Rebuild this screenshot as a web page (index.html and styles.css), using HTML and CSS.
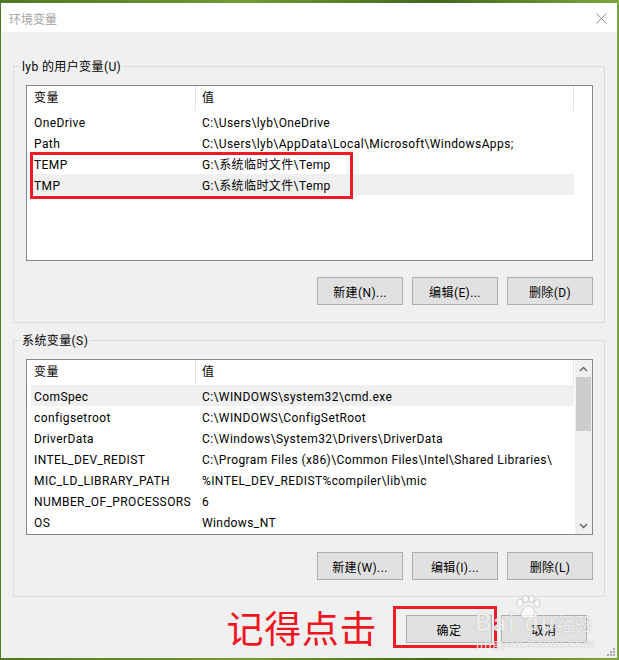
FILE: index.html
```html
<!DOCTYPE html>
<html lang="zh-CN">
<head>
<meta charset="utf-8">
<title>环境变量</title>
<link rel="stylesheet" href="styles.css">
</head>
<body>
<div class="window">
  <div class="titlebar">
    <span class="title">环境变量</span>
    <svg class="close" width="11" height="11" viewBox="0 0 11 11"><path d="M0.5 0.5 L10.5 10.5 M10.5 0.5 L0.5 10.5" stroke="#8a8a8a" stroke-width="1" fill="none"/></svg>
  </div>
  <div class="content">
    <fieldset class="group">
      <legend>lyb 的用户变量(U)</legend>
      <div class="group-body">
        <div class="list">
          <div class="list-main">
            <div class="list-header"><div class="hcell c1">变量</div><div class="hcell c2">值</div></div>
            <div class="row"><span class="c1">OneDrive</span><span class="c2">C:\Users\lyb\OneDrive</span></div>
            <div class="row"><span class="c1">Path</span><span class="c2">C:\Users\lyb\AppData\Local\Microsoft\WindowsApps;</span></div>
            <div class="row"><span class="c1">TEMP</span><span class="c2">G:\系统临时文件\Temp</span></div>
            <div class="row sel"><span class="c1">TMP</span><span class="c2">G:\系统临时文件\Temp</span></div>
          </div>
          <div class="vspace"></div>
          <div class="mark-rows"></div>
        </div>
        <div class="btns">
          <button class="btn">新建(N)...</button>
          <button class="btn">编辑(E)...</button>
          <button class="btn">删除(D)</button>
        </div>
      </div>
    </fieldset>

    <fieldset class="group group2">
      <legend>系统变量(S)</legend>
      <div class="group-body body2">
        <div class="list">
          <div class="list-main">
            <div class="list-header"><div class="hcell c1">变量</div><div class="hcell c2">值</div></div>
            <div class="row sel"><span class="c1">ComSpec</span><span class="c2">C:\WINDOWS\system32\cmd.exe</span></div>
            <div class="row"><span class="c1">configsetroot</span><span class="c2">C:\WINDOWS\ConfigSetRoot</span></div>
            <div class="row"><span class="c1">DriverData</span><span class="c2">C:\Windows\System32\Drivers\DriverData</span></div>
            <div class="row"><span class="c1">INTEL_DEV_REDIST</span><span class="c2">C:\Program Files (x86)\Common Files\Intel\Shared Libraries\</span></div>
            <div class="row"><span class="c1">MIC_LD_LIBRARY_PATH</span><span class="c2">%INTEL_DEV_REDIST%compiler\lib\mic</span></div>
            <div class="row"><span class="c1">NUMBER_OF_PROCESSORS</span><span class="c2">6</span></div>
            <div class="row"><span class="c1">OS</span><span class="c2">Windows_NT</span></div>
          </div>
          <div class="vscroll">
            <div class="arrow"><svg width="9" height="6" viewBox="0 0 9 6"><path d="M1 5 L4.5 1.5 L8 5" stroke="#606060" stroke-width="1.4" fill="none"/></svg></div>
            <div class="thumb"></div>
            <div class="track"></div>
            <div class="arrow"><svg width="9" height="6" viewBox="0 0 9 6"><path d="M1 1 L4.5 4.5 L8 1" stroke="#606060" stroke-width="1.4" fill="none"/></svg></div>
          </div>
        </div>
        <div class="btns">
          <button class="btn">新建(W)...</button>
          <button class="btn">编辑(I)...</button>
          <button class="btn">删除(L)</button>
        </div>
      </div>
    </fieldset>

    <div class="footer">
      <span class="note">记得点击</span>
      <div class="mark-ok"><button class="btn">确定</button></div>
      <button class="btn cancel">取消</button>
    </div>
  </div>

  <div class="watermark">
    <svg class="paw" width="30" height="24" viewBox="0 0 30 24">
      <g fill="rgba(255,255,255,0.75)" stroke="rgba(160,160,160,0.6)" stroke-width="0.8">
        <ellipse cx="7" cy="8" rx="3.2" ry="4"/>
        <ellipse cx="12.5" cy="4" rx="3" ry="3.6"/>
        <ellipse cx="18.5" cy="4" rx="3" ry="3.6"/>
        <ellipse cx="24" cy="8.5" rx="3" ry="3.8"/>
        <path d="M15.5 11 C11 11 8 17 8 20 C8 23 11 24 15.5 23 C20 24 23 23 23 20 C23 17 20 11 15.5 11 Z"/>
      </g>
    </svg>
    <div class="wm-line1"><span class="wm-bai">Bai</span><span class="wm-du">du</span><span class="wm-jy">经验</span></div>
    <div class="wm-line2">jingyan.baidu.com</div>
  </div>

  <svg class="grip" width="8" height="8" viewBox="0 0 8 8">
    <g fill="#a8a8a8">
      <rect x="6" y="0" width="2" height="2"/>
      <rect x="3" y="3" width="2" height="2"/><rect x="6" y="3" width="2" height="2"/>
      <rect x="0" y="6" width="2" height="2"/><rect x="3" y="6" width="2" height="2"/><rect x="6" y="6" width="2" height="2"/>
    </g>
  </svg>
</div>
</body>
</html>
```

FILE: styles.css
```css
html, body {
  margin: 0;
  padding: 0;
}
body {
  width: 619px;
  height: 660px;
  overflow: hidden;
  background: linear-gradient(90deg, #4d7a24 0%, #6e9c34 40%, #3f6a1c 70%, #7aa83c 100%);
  font-family: Roboto, "Noto Sans CJK SC", sans-serif;
  font-size: 12px;
  letter-spacing: 0.4px;
  color: #000;
}
.window {
  position: relative;
  margin: 3px 0 0 1px;
  width: 616px;
  height: 655px;
  background: #f0f0f0;
  display: flex;
  flex-direction: column;
  overflow: hidden;
}
.titlebar {
  height: 29px;
  flex: none;
  background: #fff;
  display: flex;
  align-items: center;
  justify-content: space-between;
  padding: 0 10px 0 8px;
}
.title {
  color: #a3a3a3;
  font-size: 12px;
  letter-spacing: 0;
  font-family: "Noto Sans CJK SC", sans-serif;
  margin-top: 1px;
}
.close {
  display: block;
  margin-top: 2px;
}
.content {
  padding: 26px 12px 0 12px;
  display: flex;
  flex-direction: column;
}
.group {
  margin: 0;
  padding: 0;
  border: 1px solid #dcdcdc;
  min-width: 0;
}
.group2 {
  margin-top: 9px;
}
.group legend {
  margin-left: 6px;
  padding: 0 2px;
  line-height: 18px;
  height: 17px;
  font-size: 12px;
}
.group-body {
  padding: 10px 11px 17px 12px;
}
.body2 {
  padding-bottom: 16px;
}
.list {
  position: relative;
  height: 176px;
  box-sizing: border-box;
  border: 1px solid #828790;
  background: #fff;
  display: flex;
  overflow: hidden;
}
.list-main {
  flex: 1;
  display: flex;
  flex-direction: column;
  overflow: hidden;
}
.list-header {
  width: 547px;
  height: 25px;
  flex: none;
  display: flex;
}
.hcell {
  box-sizing: border-box;
  height: 25px;
  line-height: 25px;
  border-right: 1px solid #e5e5e5;
  white-space: nowrap;
}
.hcell.c1 {
  width: 169px;
  padding-left: 7px;
}
.hcell.c2 {
  flex: 1;
  padding-left: 6px;
}
.row {
  margin-left: 4px;
  width: 543px;
  height: 21px;
  box-sizing: border-box;
  padding-top: 3px;
  flex: none;
  line-height: 18px;
  display: flex;
  white-space: nowrap;
}
.row.sel {
  background: #f0f0f0;
}
.row .c1 {
  width: 165px;
  padding-left: 3px;
  box-sizing: border-box;
  flex: none;
}
.row .c2 {
  padding-left: 6px;
}
.vspace {
  width: 17px;
  flex: none;
}
.vscroll {
  width: 17px;
  flex: none;
  background: #f0f0f0;
  display: flex;
  flex-direction: column;
}
.arrow {
  height: 17px;
  flex: none;
  display: flex;
  align-items: center;
  justify-content: center;
}
.thumb {
  height: 54px;
  flex: none;
  margin: 0 1px;
  background: #cdcdcd;
}
.track {
  flex: 1;
}
.mark-rows {
  position: absolute;
  left: 3px;
  top: 66px;
  width: 323px;
  height: 47px;
  box-sizing: border-box;
  border: 3px solid #ed1c24;
}
.btns {
  display: flex;
  justify-content: flex-end;
  gap: 9px;
  margin-top: 16px;
}
.body2 .btns {
  margin-top: 17px;
}
.btn {
  width: 86px;
  height: 28px;
  box-sizing: border-box;
  border: 1px solid #adadad;
  background: #e1e1e1;
  font-family: Roboto, "Noto Sans CJK SC", sans-serif;
  font-size: 12px;
  letter-spacing: 0.4px;
  color: #000;
  padding: 0;
  margin: 0;
}
.footer {
  margin-top: 9px;
  margin-right: 18px;
  display: flex;
  justify-content: flex-end;
  align-items: flex-start;
}
.note {
  font-family: "Noto Sans CJK SC", sans-serif;
  font-size: 37px;
  line-height: 42px;
  height: 42px;
  color: #f0141e;
  margin-right: 16px;
  letter-spacing: 0.6px;
}
.mark-ok {
  border: 3px solid #ed1c24;
  padding: 6px 2px 2px 10px;
  display: flex;
}
.cancel {
  margin-top: 9px;
  margin-left: 4px;
}
.watermark {
  position: absolute;
  left: 474px;
  top: 590px;
  width: 140px;
  height: 60px;
  pointer-events: none;
}
.paw {
  position: absolute;
  left: 38px;
  top: 2px;
}
.wm-line1 {
  position: absolute;
  left: 0;
  top: 14px;
  font-family: Lato, sans-serif;
  font-weight: 700;
  font-size: 25px;
  line-height: 28px;
  letter-spacing: 2px;
  color: rgba(255, 255, 255, 0.8);
  text-shadow: 0 0 1px rgba(120, 120, 120, 0.6);
  white-space: nowrap;
}
.wm-du {
  margin-left: 8px;
}
.wm-jy {
  font-family: "Noto Sans CJK SC", sans-serif;
  font-size: 18px;
  margin-left: 0;
  letter-spacing: 0;
  font-weight: 400;
}
.wm-line2 {
  position: absolute;
  left: 1px;
  top: 43px;
  font-family: Lato, sans-serif;
  font-size: 13px;
  line-height: 14px;
  letter-spacing: 1px;
  color: rgba(255, 255, 255, 0.8);
  text-shadow: 0 0 1px rgba(120, 120, 120, 0.6);
  white-space: nowrap;
}
.grip {
  position: absolute;
  right: 2px;
  bottom: 2px;
}
```
